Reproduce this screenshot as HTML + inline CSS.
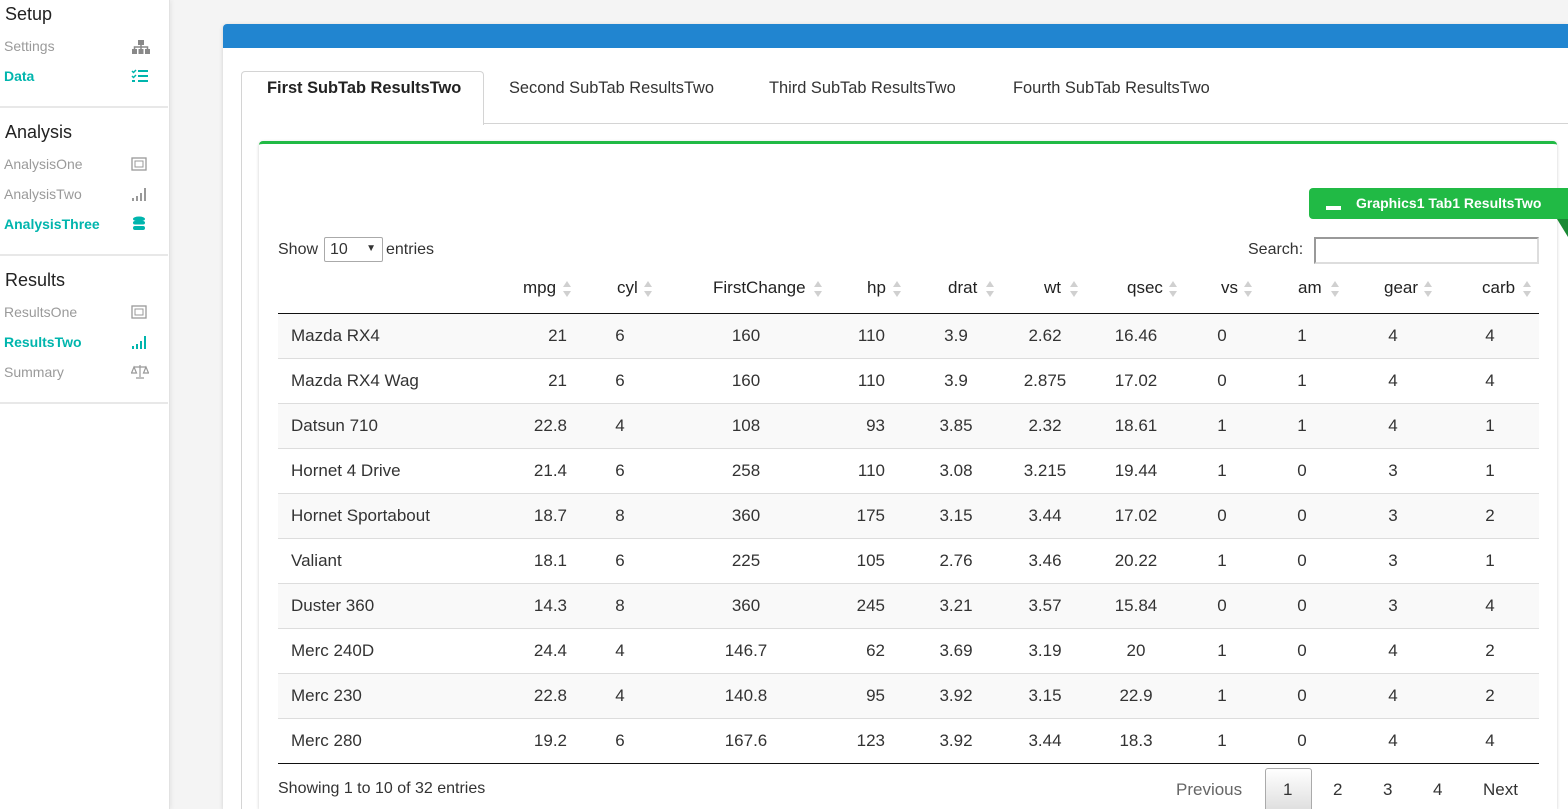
<!DOCTYPE html>
<html style="overflow:hidden;width:1568px;height:809px"><head><meta charset="utf-8"><style>
*{box-sizing:border-box;margin:0;padding:0}
body{width:1568px;height:809px;overflow:hidden;background:#f4f4f4;font-family:"Liberation Sans",sans-serif;color:#333;position:relative}
.side{position:absolute;left:0;top:0;width:170px;height:809px;background:#fff;border-right:1px solid #e2e2e2;box-shadow:2px 0 4px rgba(0,0,0,.05)}
.h{position:absolute;left:5px;font-size:18px;color:#222}
.it{position:absolute;left:4px;font-size:14px;color:#9a9a9a}
.it.a{color:#00b5ad;font-weight:bold}
.ic{position:absolute;left:131px}
.dv{position:absolute;left:0;width:168px;height:2px;background:#e8e8e8}
.box{position:absolute;left:223px;top:24px;width:1345px;height:785px;background:#fff;border-radius:4px 0 0 0;box-shadow:0 1px 4px rgba(0,0,0,.15)}
.bar{position:absolute;left:0;top:0;width:100%;height:24px;background:#2185d0;border-radius:4px 0 0 0}
.tab{position:absolute;top:79px;font-size:16.4px;color:#333}
.inner{position:absolute;left:259px;top:141px;width:1298px;height:668px;background:#fff;border-top:3px solid #21ba45;border-radius:4px 4px 0 0;box-shadow:0 1px 3px rgba(0,0,0,.2)}
.t{position:absolute;font-size:17px;color:#333;white-space:nowrap}
table{position:absolute;left:278px;top:313px;width:1261px;border-collapse:collapse;table-layout:fixed;font-size:17px;color:#333}
td{height:45px;border-top:1px solid #ddd;padding:0;white-space:nowrap}
tr:first-child td{border-top:1px solid #111}
tr:nth-child(odd) td{background:#f9f9f9}
tr:last-child td{border-bottom:1px solid #111}
td{text-align:center}
td:nth-child(1){text-align:left;padding-left:13px}
td:nth-child(2){text-align:right;padding-right:23px}
td:nth-child(5){text-align:right;padding-right:20px}
td:nth-child(12){padding-left:4px}
.th{position:absolute;top:278px;font-size:17px;color:#222}
.sa{position:absolute;top:280px;width:10px;height:18px}
</style></head><body>
<div class="side">
<div class="h" style="top:4px">Setup</div>
<div class="it" style="top:38px">Settings</div>
<svg class="ic" style="top:39px" width="20" height="16" viewBox="0 0 20 16"><rect x="7" y="1" width="6" height="5" fill="#888"/><rect x="1" y="10" width="5" height="5" fill="#888"/><rect x="7.5" y="10" width="5" height="5" fill="#888"/><rect x="14" y="10" width="5" height="5" fill="#888"/><path d="M3.5 10V8h13v2M10 6v4" stroke="#888" fill="none" stroke-width="1.5"/></svg>
<div class="it a" style="top:68px">Data</div>
<svg class="ic" style="top:69px" width="18" height="14" viewBox="0 0 18 14"><path d="M1 2l1.5 1.5L5 1M1 7l1.5 1.5L5 6" stroke="#00b5ad" fill="none" stroke-width="1.5"/><rect x="1" y="11" width="3" height="2" fill="#00b5ad"/><rect x="7" y="1" width="10" height="2" fill="#00b5ad"/><rect x="7" y="6" width="10" height="2" fill="#00b5ad"/><rect x="7" y="11" width="10" height="2" fill="#00b5ad"/></svg>
<div class="dv" style="top:106px"></div>
<div class="h" style="top:122px">Analysis</div>
<div class="it" style="top:156px">AnalysisOne</div>
<svg class="ic" style="top:157px" width="16" height="14" viewBox="0 0 16 14"><rect x="1" y="1" width="14" height="12" fill="none" stroke="#999" stroke-width="1.3"/><rect x="4" y="4" width="8" height="6" fill="none" stroke="#999"/></svg>
<div class="it" style="top:186px">AnalysisTwo</div>
<svg class="ic" style="top:186px" width="18" height="16" viewBox="0 0 18 16"><rect x="1" y="12" width="2" height="3" fill="#999"/><rect x="5" y="10" width="2" height="5" fill="#999"/><rect x="9" y="7" width="2" height="8" fill="#999"/><rect x="13" y="2" width="2" height="13" fill="#999"/></svg>
<div class="it a" style="top:216px">AnalysisThree</div>
<svg class="ic" style="top:216px" width="16" height="16" viewBox="0 0 16 16"><ellipse cx="8" cy="3" rx="6" ry="2.5" fill="#00b5ad"/><rect x="2" y="5" width="12" height="3.5" rx="2" fill="#00b5ad"/><rect x="2" y="10" width="12" height="4" rx="2" fill="#00b5ad"/></svg>
<div class="dv" style="top:254px"></div>
<div class="h" style="top:270px">Results</div>
<div class="it" style="top:304px">ResultsOne</div>
<svg class="ic" style="top:305px" width="16" height="14" viewBox="0 0 16 14"><rect x="1" y="1" width="14" height="12" fill="none" stroke="#999" stroke-width="1.3"/><rect x="4" y="4" width="8" height="6" fill="none" stroke="#999"/></svg>
<div class="it a" style="top:334px">ResultsTwo</div>
<svg class="ic" style="top:334px" width="18" height="16" viewBox="0 0 18 16"><rect x="1" y="12" width="2" height="3" fill="#00b5ad"/><rect x="5" y="10" width="2" height="5" fill="#00b5ad"/><rect x="9" y="7" width="2" height="8" fill="#00b5ad"/><rect x="13" y="2" width="2" height="13" fill="#00b5ad"/></svg>
<div class="it" style="top:364px">Summary</div>
<svg class="ic" style="top:364px" width="18" height="16" viewBox="0 0 18 16"><path d="M9 1v12M3 3h12M3 3l-2.5 6h5zM15 3l-2.5 6h5zM5 14h8" stroke="#999" fill="none" stroke-width="1.2"/></svg>
<div class="dv" style="top:402px"></div>
</div>

<div class="box"><div class="bar"></div></div>
<div style="position:absolute;left:241px;top:71px;width:243px;height:54px;background:#fff;border:1px solid #d4d4d4;border-bottom:none;border-radius:4px 4px 0 0"></div>
<div style="position:absolute;left:483px;top:123px;width:1085px;height:1px;background:#d4d4d4"></div>
<div style="position:absolute;left:241px;top:124px;width:1px;height:685px;background:#d4d4d4"></div>
<div class="tab" style="left:267px;font-weight:bold;color:#222">First SubTab ResultsTwo</div>
<div class="tab" style="left:509px">Second SubTab ResultsTwo</div>
<div class="tab" style="left:769px">Third SubTab ResultsTwo</div>
<div class="tab" style="left:1013px">Fourth SubTab ResultsTwo</div>

<div class="inner"></div>
<div style="position:absolute;left:1309px;top:188px;width:259px;height:31px;background:#21ba45;border-radius:4px 0 0 4px;color:#fff;font-size:14px;font-weight:bold;line-height:31px;padding-left:47px">Graphics1 Tab1 ResultsTwo</div>
<div style="position:absolute;left:1326px;top:206px;width:15px;height:4px;background:#fff"></div>
<div style="position:absolute;left:1557px;top:219px;width:0;height:0;border-top:18px solid #1a8a34;border-left:11px solid transparent"></div>

<div class="t" style="left:278px;top:241px;font-size:16px">Show</div>
<div style="position:absolute;left:324px;top:237px;width:59px;height:25px;border:1px solid #aaa;border-radius:2px;font-size:16px;padding:3px 0 0 5px">10 <span style="position:absolute;right:6px;top:5px;font-size:10px">▼</span></div>
<div class="t" style="left:386px;top:241px;font-size:16px">entries</div>
<div class="t" style="left:1248px;top:241px;font-size:16px">Search:</div>
<div style="position:absolute;left:1314px;top:237px;width:225px;height:27px;border:2px solid #999;border-right-color:#ddd;border-bottom-color:#ddd"></div>

<div class="th" style="left:523px">mpg</div>
<div class="th" style="left:617px">cyl</div>
<div class="th" style="left:713px">FirstChange</div>
<div class="th" style="left:867px">hp</div>
<div class="th" style="left:948px">drat</div>
<div class="th" style="left:1044px">wt</div>
<div class="th" style="left:1127px">qsec</div>
<div class="th" style="left:1221px">vs</div>
<div class="th" style="left:1298px">am</div>
<div class="th" style="left:1384px">gear</div>
<div class="th" style="left:1482px">carb</div>
<svg width="0" height="0" style="position:absolute"><defs><g id="s"><path d="M5 1L9 7H1z M5 17L9 11H1z" fill="#d0d0d0"/></g></defs></svg>
<svg class="sa" style="left:562px"><use href="#s"/></svg>
<svg class="sa" style="left:643px"><use href="#s"/></svg>
<svg class="sa" style="left:813px"><use href="#s"/></svg>
<svg class="sa" style="left:892px"><use href="#s"/></svg>
<svg class="sa" style="left:985px"><use href="#s"/></svg>
<svg class="sa" style="left:1069px"><use href="#s"/></svg>
<svg class="sa" style="left:1168px"><use href="#s"/></svg>
<svg class="sa" style="left:1243px"><use href="#s"/></svg>
<svg class="sa" style="left:1330px"><use href="#s"/></svg>
<svg class="sa" style="left:1423px"><use href="#s"/></svg>
<svg class="sa" style="left:1522px"><use href="#s"/></svg>

<table>
<colgroup><col style="width:232px"><col style="width:80px"><col style="width:60px"><col style="width:192px"><col style="width:63px"><col style="width:102px"><col style="width:76px"><col style="width:106px"><col style="width:66px"><col style="width:94px"><col style="width:88px"><col style="width:102px"></colgroup>
<tr><td>Mazda RX4</td><td>21</td><td>6</td><td>160</td><td>110</td><td>3.9</td><td>2.62</td><td>16.46</td><td>0</td><td>1</td><td>4</td><td>4</td></tr>
<tr><td>Mazda RX4 Wag</td><td>21</td><td>6</td><td>160</td><td>110</td><td>3.9</td><td>2.875</td><td>17.02</td><td>0</td><td>1</td><td>4</td><td>4</td></tr>
<tr><td>Datsun 710</td><td>22.8</td><td>4</td><td>108</td><td>93</td><td>3.85</td><td>2.32</td><td>18.61</td><td>1</td><td>1</td><td>4</td><td>1</td></tr>
<tr><td>Hornet 4 Drive</td><td>21.4</td><td>6</td><td>258</td><td>110</td><td>3.08</td><td>3.215</td><td>19.44</td><td>1</td><td>0</td><td>3</td><td>1</td></tr>
<tr><td>Hornet Sportabout</td><td>18.7</td><td>8</td><td>360</td><td>175</td><td>3.15</td><td>3.44</td><td>17.02</td><td>0</td><td>0</td><td>3</td><td>2</td></tr>
<tr><td>Valiant</td><td>18.1</td><td>6</td><td>225</td><td>105</td><td>2.76</td><td>3.46</td><td>20.22</td><td>1</td><td>0</td><td>3</td><td>1</td></tr>
<tr><td>Duster 360</td><td>14.3</td><td>8</td><td>360</td><td>245</td><td>3.21</td><td>3.57</td><td>15.84</td><td>0</td><td>0</td><td>3</td><td>4</td></tr>
<tr><td>Merc 240D</td><td>24.4</td><td>4</td><td>146.7</td><td>62</td><td>3.69</td><td>3.19</td><td>20</td><td>1</td><td>0</td><td>4</td><td>2</td></tr>
<tr><td>Merc 230</td><td>22.8</td><td>4</td><td>140.8</td><td>95</td><td>3.92</td><td>3.15</td><td>22.9</td><td>1</td><td>0</td><td>4</td><td>2</td></tr>
<tr><td>Merc 280</td><td>19.2</td><td>6</td><td>167.6</td><td>123</td><td>3.92</td><td>3.44</td><td>18.3</td><td>1</td><td>0</td><td>4</td><td>4</td></tr>
</table>

<div class="t" style="left:278px;top:780px;font-size:16px">Showing 1 to 10 of 32 entries</div>
<div class="t" style="left:1176px;top:780px;color:#666">Previous</div>
<div style="position:absolute;left:1265px;top:768px;width:47px;height:45px;border:1px solid #aaa;border-radius:3px;background:linear-gradient(#fff,#ddd)"></div>
<div class="t" style="left:1283px;top:780px">1</div>
<div class="t" style="left:1333px;top:780px">2</div>
<div class="t" style="left:1383px;top:780px">3</div>
<div class="t" style="left:1433px;top:780px">4</div>
<div class="t" style="left:1483px;top:780px">Next</div>
</body></html>
